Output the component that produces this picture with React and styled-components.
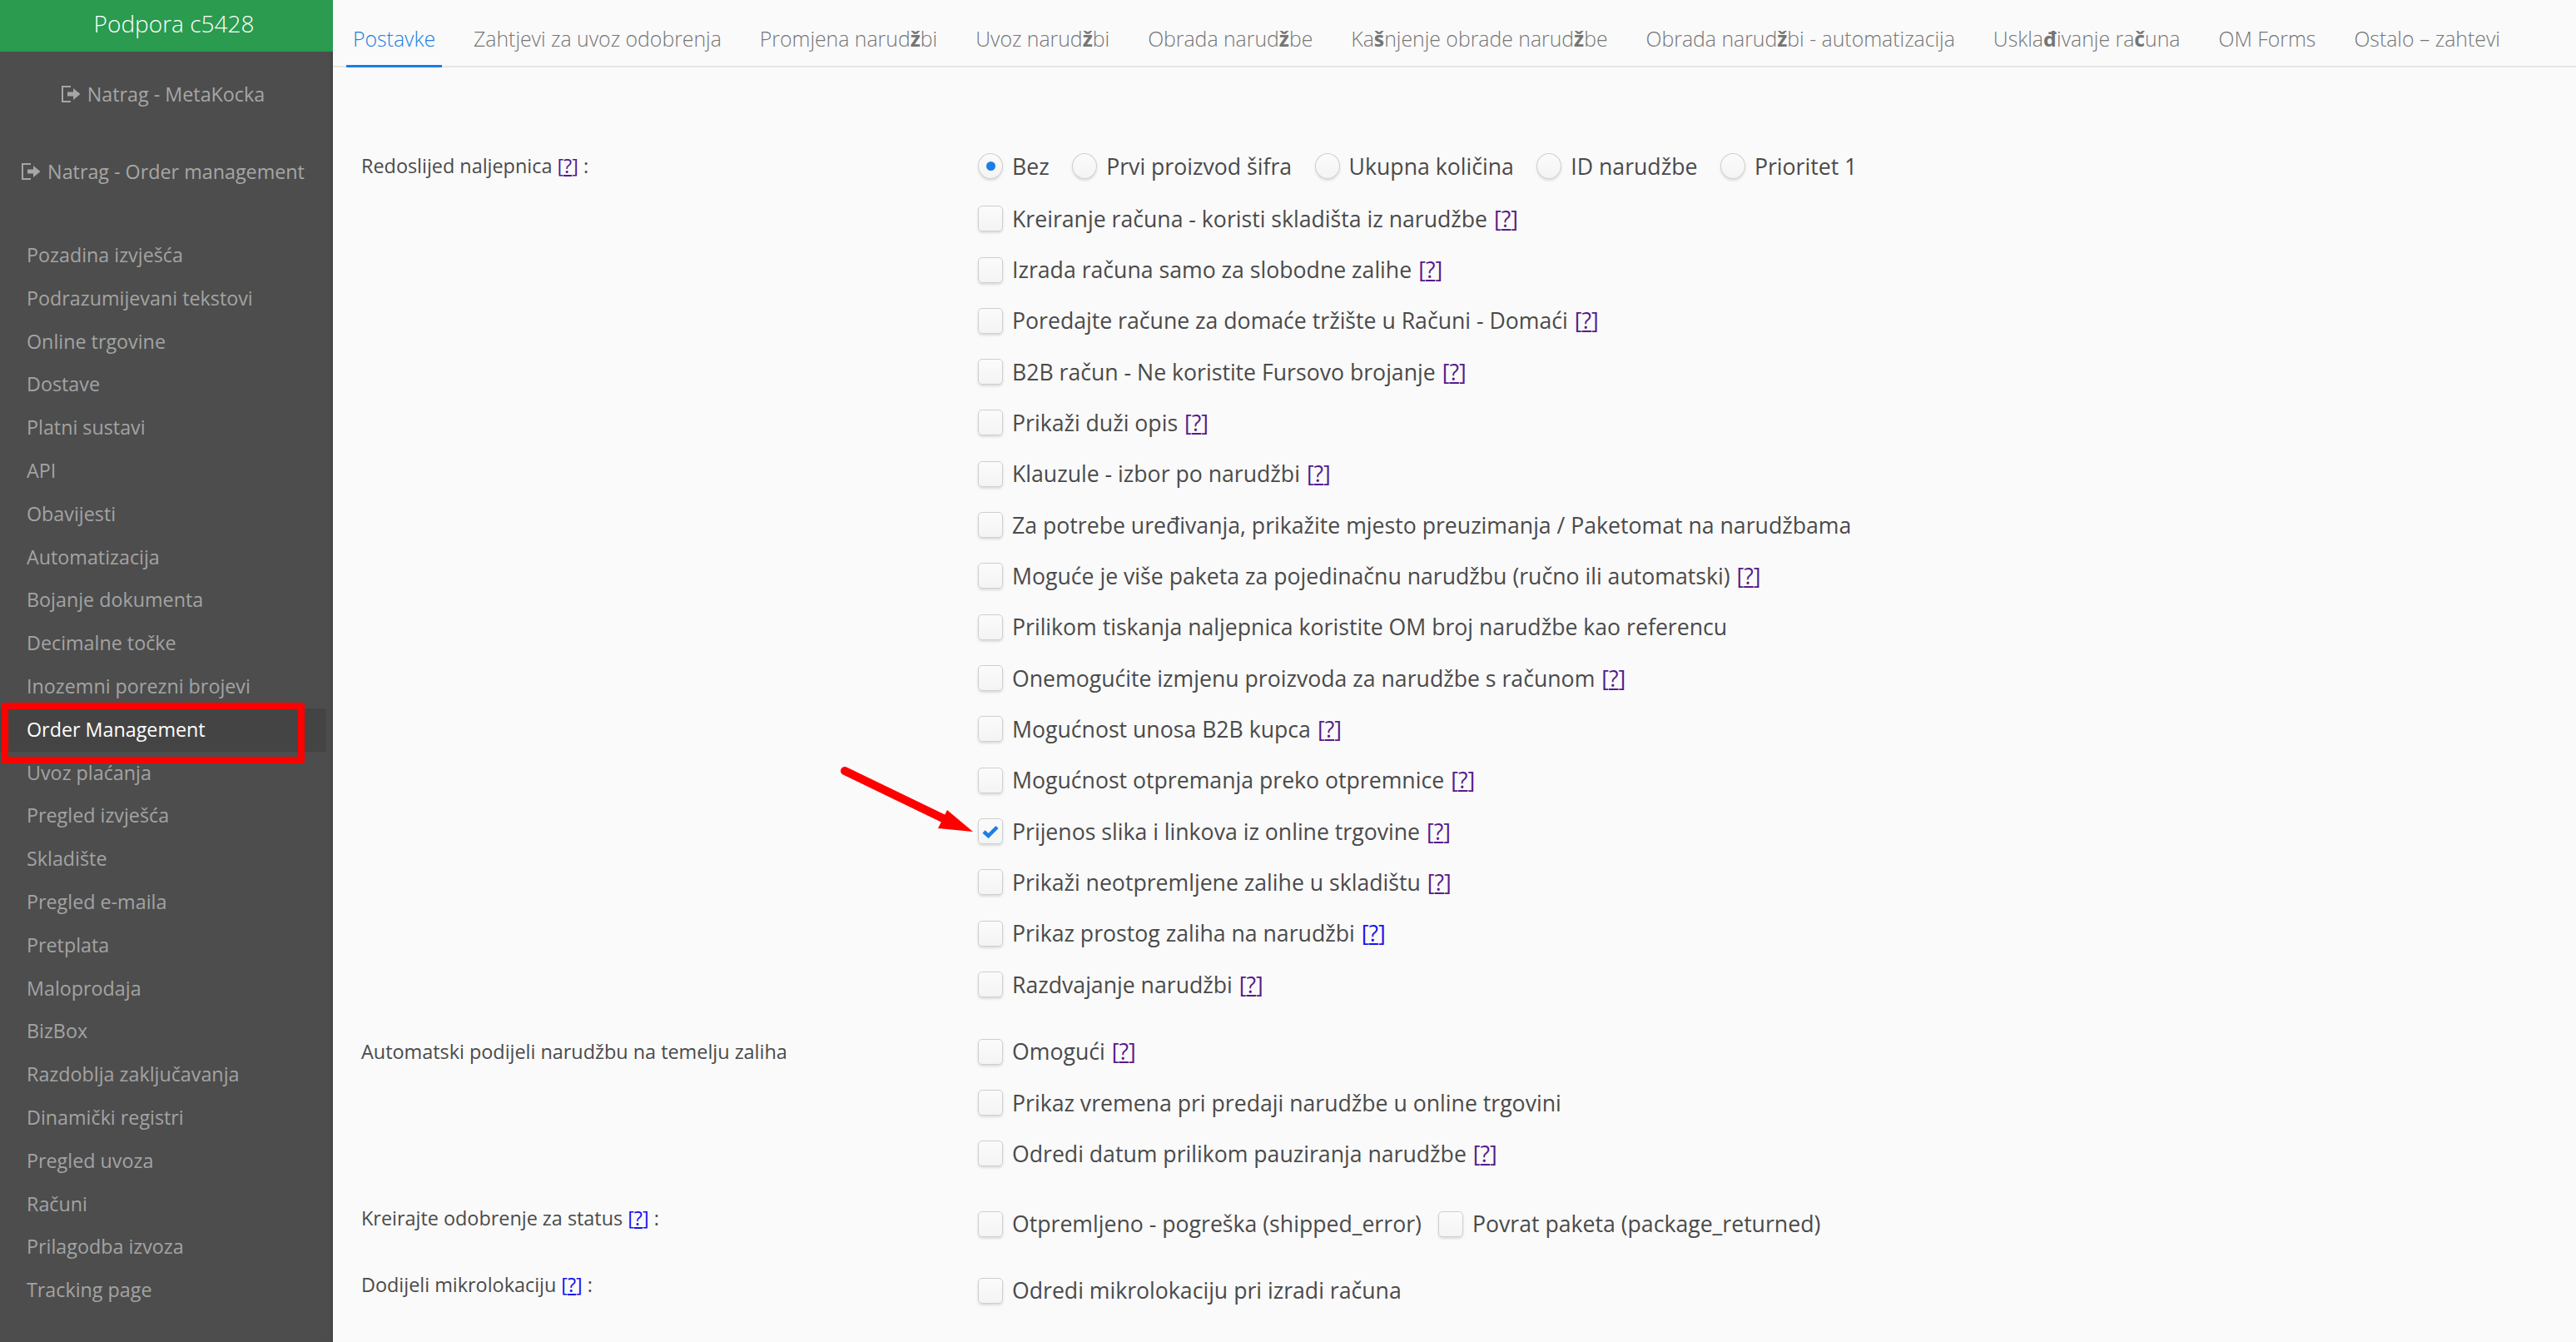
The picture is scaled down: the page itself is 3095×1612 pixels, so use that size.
import React from "react";
import styled, { createGlobalStyle } from "styled-components";

const GlobalStyle = createGlobalStyle`
  html, body {
    margin: 0;
    padding: 0;
    height: 100%;
    overflow: hidden;
    background: #fafafa;
    font-family: "Open Sans", "Noto Sans", sans-serif;
  }
`;

const sideItems = [
  "Pozadina izvješća",
  "Podrazumijevani tekstovi",
  "Online trgovine",
  "Dostave",
  "Platni sustavi",
  "API",
  "Obavijesti",
  "Automatizacija",
  "Bojanje dokumenta",
  "Decimalne točke",
  "Inozemni porezni brojevi",
  "Order Management",
  "Uvoz plaćanja",
  "Pregled izvješća",
  "Skladište",
  "Pregled e-maila",
  "Pretplata",
  "Maloprodaja",
  "BizBox",
  "Razdoblja zaključavanja",
  "Dinamički registri",
  "Pregled uvoza",
  "Računi",
  "Prilagodba izvoza",
  "Tracking page",
];

const tabs = [
  ["Postavke"],
  ["Zahtjevi za uvoz odobrenja"],
  ["Promjena narud", "ž", "bi"],
  ["Uvoz narud", "ž", "bi"],
  ["Obrada narud", "ž", "be"],
  ["Ka", "š", "njenje obrade narud", "ž", "be"],
  ["Obrada narud", "ž", "bi - automatizacija"],
  ["Uskla", "đ", "ivanje ra", "č", "una"],
  ["OM Forms"],
  ["Ostalo – zahtevi"],
];

const firstGroup = [
  { text: "Kreiranje računa - koristi skladišta iz narudžbe", help: "visited" },
  { text: "Izrada računa samo za slobodne zalihe", help: "visited" },
  { text: "Poredajte račune za domaće tržište u Računi - Domaći", help: "visited" },
  { text: "B2B račun - Ne koristite Fursovo brojanje", help: "visited" },
  { text: "Prikaži duži opis", help: "visited" },
  { text: "Klauzule - izbor po narudžbi", help: "visited" },
  { text: "Za potrebe uređivanja, prikažite mjesto preuzimanja / Paketomat na narudžbama" },
  { text: "Moguće je više paketa za pojedinačnu narudžbu (ručno ili automatski)", help: "visited" },
  { text: "Prilikom tiskanja naljepnica koristite OM broj narudžbe kao referencu" },
  { text: "Onemogućite izmjenu proizvoda za narudžbe s računom", help: "visited" },
  { text: "Mogućnost unosa B2B kupca", help: "visited" },
  { text: "Mogućnost otpremanja preko otpremnice", help: "visited" },
  { text: "Prijenos slika i linkova iz online trgovine", help: "visited", checked: true, arrow: true },
  { text: "Prikaži neotpremljene zalihe u skladištu", help: "visited" },
  { text: "Prikaz prostog zaliha na narudžbi", help: "fresh" },
  { text: "Razdvajanje narudžbi", help: "visited" },
];

const secondGroup = [
  { text: "Omogući", help: "visited" },
  { text: "Prikaz vremena pri predaji narudžbe u online trgovini" },
  { text: "Odredi datum prilikom pauziranja narudžbe", help: "visited" },
];

const Page = styled.div`
  display: flex;
  width: 3095px;
  height: 1612px;
  overflow: hidden;
`;

const Sidebar = styled.aside`
  flex: 0 0 400px;
  background: #4d4d4d;
  box-shadow: inset -6px 0 6px -6px rgba(0, 0, 0, 0.25);
`;

const Brand = styled.div`
  height: 62px;
  background: #2a9b4f;
  color: #fff;
  font-size: 28px;
  font-weight: 300;
  line-height: 56px;
  text-align: center;
  padding-left: 18px;
  box-sizing: border-box;
`;

const BackLinks = styled.div`
  display: flex;
  flex-direction: column;
  padding: 4px 0 29px;
`;

const BackLink = styled.a`
  display: flex;
  align-items: center;
  justify-content: center;
  gap: 8px;
  height: 93px;
  padding-right: 8px;
  color: #a6a6a6;
  font-size: 23.3px;
`;

const SideList = styled.nav`
  display: flex;
  flex-direction: column;
`;

const SideItem = styled.a`
  position: relative;
  height: 51.8px;
  line-height: 51.8px;
  padding-left: 32px;
  font-size: 23.3px;
  color: ${(p) => (p.$active ? "#fff" : "#a3a3a3")};
  background: ${(p) => (p.$active ? "#444" : "transparent")};
  margin-right: ${(p) => (p.$active ? "8px" : "0")};

  ${(p) =>
    p.$active &&
    `&::after {
      content: "";
      position: absolute;
      left: 2px;
      right: 26px;
      top: -7px;
      bottom: -14px;
      border: 8px solid #ff0000;
      border-radius: 3px;
    }`}
`;

const Main = styled.main`
  position: relative;
  flex: 1;
  min-width: 0;
`;

const TabBar = styled.div`
  display: flex;
  gap: 30px;
  height: 80px;
  margin-top: 1px;
  padding-left: 16px;
  border-bottom: 2px solid #e6e6e6;
  box-sizing: border-box;
`;

const Tab = styled.a`
  height: 80px;
  padding: 0 8px;
  box-sizing: border-box;
  line-height: 90px;
  font-size: 24.8px;
  font-weight: 300;
  white-space: nowrap;
  color: ${(p) => (p.$active ? "#1a7fe5" : "#757575")};
  border-bottom: 3px solid ${(p) => (p.$active ? "#1a7fe5" : "transparent")};
`;

const Heavy = styled.span`
  font-weight: 700;
`;

const Form = styled.div`
  display: flex;
  flex-direction: column;
  padding: 88px 0 0 34px;
`;

const Section = styled.section`
  display: grid;
  grid-template-columns: 741px 1fr;
  margin-bottom: ${(p) => p.$gap || 0}px;
`;

const Label = styled.div`
  font-size: 23.4px;
  color: #4a4a4a;
  line-height: ${(p) => p.$line || 61.33}px;
`;

const Options = styled.div`
  display: flex;
  flex-direction: column;
`;

const Row = styled.div`
  position: relative;
  display: flex;
  align-items: center;
  height: 61.33px;
`;

const RadioRow = styled(Row)`
  margin-bottom: 1.7px;
`;

const RadioGroup = styled.label`
  display: flex;
  align-items: center;
  margin-right: 27.5px;
`;

const InlineOption = styled.label`
  display: flex;
  align-items: center;
  margin-right: 20px;
`;

const Box = styled.span`
  flex: 0 0 30px;
  width: 30px;
  height: 31px;
  box-sizing: border-box;
  border: 1px solid #cfcfcf;
  border-radius: ${(p) => (p.$round ? "50%" : "5px")};
  background: linear-gradient(#fbfbfb, #f4f4f4);
  box-shadow: 0 2px 3px rgba(0, 0, 0, 0.12);
  display: flex;
  align-items: center;
  justify-content: center;
  margin-right: 11px;
`;

const Dot = styled.span`
  width: 11px;
  height: 11px;
  border-radius: 50%;
  background: #1a7fe5;
`;

const Text = styled.span`
  font-size: 26.65px;
  color: #4a4a4a;
  white-space: nowrap;
`;

const Help = styled.a`
  color: ${(p) => (p.$fresh ? "#1414ee" : "#551a8b")};
  margin-left: ${(p) => (p.$small ? "6px" : "8px")};
  font-size: ${(p) => (p.$small ? "23.4px" : "inherit")};
`;

const HelpMark = styled.span`
  text-decoration: underline;
  text-underline-offset: 2px;
`;

const ArrowMark = styled.svg`
  position: absolute;
  left: -170px;
  top: -63px;
  width: 170px;
  height: 100px;
`;

const LogoutIcon = () => (
  <svg width="23" height="20" viewBox="0 0 23 20">
    <path d="M11 1H1v18h10" fill="none" stroke="#a6a6a6" strokeWidth="2" />
    <path d="M7 7.5h7V3l8.5 7-8.5 7v-4.5H7z" fill="#a6a6a6" />
  </svg>
);

const Check = () => (
  <svg width="20" height="16" viewBox="0 0 20 16">
    <path d="M2 8 7.5 13 18 2.5" fill="none" stroke="#1a7fe5" strokeWidth="4.5" />
  </svg>
);

const HelpLink = ({ fresh, small }) => (
  <Help $fresh={fresh} $small={small}>
    [<HelpMark>?</HelpMark>]
  </Help>
);

const Option = ({ item }) => (
  <Row>
    <Box>{item.checked && <Check />}</Box>
    <Text>
      {item.text}
      {item.help && <HelpLink fresh={item.help === "fresh"} />}
    </Text>
    {item.arrow && (
      <ArrowMark viewBox="0 0 170 100">
        <path d="M10 21 128 78" stroke="#ff0000" strokeWidth="10" strokeLinecap="round" />
        <path d="M164 94 133 68 122 90z" fill="#ff0000" />
      </ArrowMark>
    )}
  </Row>
);

const App = () => (
  <Page>
    <GlobalStyle />
    <Sidebar>
      <Brand>Podpora c5428</Brand>
      <BackLinks>
        <BackLink>
          <LogoutIcon />
          Natrag - MetaKocka
        </BackLink>
        <BackLink>
          <LogoutIcon />
          Natrag - Order management
        </BackLink>
      </BackLinks>
      <SideList>
        {sideItems.map((name) => (
          <SideItem key={name} $active={name === "Order Management"}>
            {name}
          </SideItem>
        ))}
      </SideList>
    </Sidebar>
    <Main>
      <TabBar>
        {tabs.map((parts, i) => (
          <Tab key={i} $active={i === 0}>
            {parts.map((part, j) => (j % 2 ? <Heavy key={j}>{part}</Heavy> : part))}
          </Tab>
        ))}
      </TabBar>
      <Form>
        <Section $gap={19.3}>
          <Label>
            Redoslijed naljepnica
            <HelpLink small /> :
          </Label>
          <Options>
            <RadioRow>
              {[
                "Bez",
                "Prvi proizvod šifra",
                "Ukupna količina",
                "ID narudžbe",
                "Prioritet 1",
              ].map((name, i) => (
                <RadioGroup key={name}>
                  <Box $round>{i === 0 && <Dot />}</Box>
                  <Text>{name}</Text>
                </RadioGroup>
              ))}
            </RadioRow>
            {firstGroup.map((item) => (
              <Option key={item.text} item={item} />
            ))}
          </Options>
        </Section>
        <Section $gap={23}>
          <Label>Automatski podijeli narudžbu na temelju zaliha</Label>
          <Options>
            {secondGroup.map((item) => (
              <Option key={item.text} item={item} />
            ))}
          </Options>
        </Section>
        <Section $gap={18.7}>
          <Label $line={47}>
            Kreirajte odobrenje za status
            <HelpLink small fresh /> :
          </Label>
          <Row>
            <InlineOption>
              <Box />
              <Text>Otpremljeno - pogreška (shipped_error)</Text>
            </InlineOption>
            <InlineOption>
              <Box />
              <Text>Povrat paketa (package_returned)</Text>
            </InlineOption>
          </Row>
        </Section>
        <Section>
          <Label $line={47}>
            Dodijeli mikrolokaciju
            <HelpLink small fresh /> :
          </Label>
          <Row>
            <Box />
            <Text>Odredi mikrolokaciju pri izradi računa</Text>
          </Row>
        </Section>
      </Form>
    </Main>
  </Page>
);

export default App;
